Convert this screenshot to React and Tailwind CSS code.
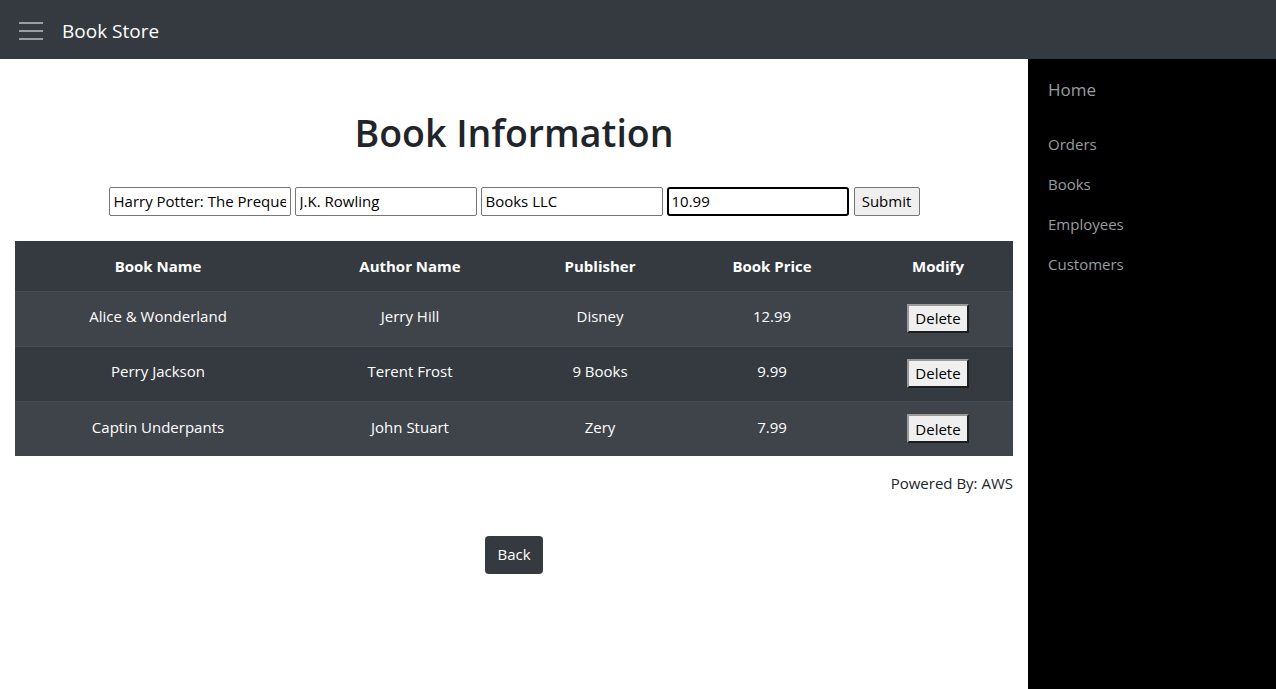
import React from "react";

const rows = [
  ["Alice & Wonderland", "Jerry Hill", "Disney", "12.99"],
  ["Perry Jackson", "Terent Frost", "9 Books", "9.99"],
  ["Captin Underpants", "John Stuart", "Zery", "7.99"],
];

export default function App() {
  const font = { fontFamily: '"Open Sans", "Noto Sans", sans-serif' };
  return (
    <div className="w-[1276px] h-[689px] flex flex-col bg-white text-[#212529]" style={font}>
      <header className="h-[59px] bg-[#343a40] flex items-center shrink-0">
        <div className="ml-[19px] mt-[3px] w-[24px] flex flex-col gap-[6px]">
          <span className="block h-[2px] bg-[#9a9da0]" />
          <span className="block h-[2px] bg-[#9a9da0]" />
          <span className="block h-[2px] bg-[#9a9da0]" />
        </div>
        <span className="ml-[19px] mt-[3px] text-[19px] text-white">Book Store</span>
      </header>
      <div className="flex flex-1">
        <main className="w-[1028px] flex flex-col items-center px-[15px]">
          <h1 className="mt-[50px] text-[37.5px] font-semibold leading-[48px] text-[#212529]">
            Book Information
          </h1>
          <div className="mt-[29px] flex items-center gap-[4px] h-[30px]">
            <input defaultValue="Harry Potter: The Prequel" className="w-[182px] h-[29px] border border-[#767676] rounded-[2px] px-[4px] text-[15px] text-black outline-none" />
            <input defaultValue="J.K. Rowling" className="w-[182px] h-[29px] border border-[#767676] rounded-[2px] px-[4px] text-[15px] text-black outline-none" />
            <input defaultValue="Books LLC" className="w-[182px] h-[29px] border border-[#767676] rounded-[2px] px-[4px] text-[15px] text-black outline-none" />
            <input defaultValue="10.99" className="w-[182px] h-[29px] border-2 border-black rounded-[3px] px-[3px] text-[15px] text-black outline-none" />
            <button className="ml-[1px] h-[29px] w-[66px] bg-[#efefef] border border-[#767676] rounded-[2px] text-[15px] text-black">Submit</button>
          </div>
          <table className="mt-[25px] w-[998px] text-white text-[15px] border-collapse">
            <thead>
              <tr className="h-[50px] bg-[#343a40]">
                <th className="w-[286px] font-bold">Book Name</th>
                <th className="w-[218px] font-bold">Author Name</th>
                <th className="w-[162px] font-bold">Publisher</th>
                <th className="w-[182px] font-bold">Book Price</th>
                <th className="font-bold">Modify</th>
              </tr>
            </thead>
            <tbody>
              {rows.map((r, i) => (
                <tr key={i} className={`h-[55px] border-t border-[#454d55] ${i % 2 === 0 ? "bg-[#3f444b]" : "bg-[#343a40]"}`}>
                  <td className="text-center align-middle pb-[4px]">{r[0]}</td>
                  <td className="text-center align-middle pb-[4px]">{r[1]}</td>
                  <td className="text-center align-middle pb-[4px]">{r[2]}</td>
                  <td className="text-center align-middle pb-[4px]">{r[3]}</td>
                  <td className="text-center align-middle pb-[4px]">
                    <button className="mt-[4px] w-[62px] h-[29px] bg-[#efefef] text-black border-2 border-t-[#9a9a9a] border-l-[#9a9a9a] border-b-[#1e1e1e] border-r-[#1e1e1e] text-[15px]">
                      Delete
                    </button>
                  </td>
                </tr>
              ))}
            </tbody>
          </table>
          <div className="w-[998px] text-right text-[15px] mt-[16px]">Powered By: AWS</div>
          <button className="mt-[41px] w-[58px] h-[38px] bg-[#343a40] text-white rounded-[4px] text-[15px]">Back</button>
        </main>
        <aside className="flex-1 bg-black pl-[20px]">
          <div className="mt-[19px] text-[17px] text-[#9a9da0] leading-[24px]">Home</div>
          <nav className="mt-[32px] flex flex-col gap-[19px] text-[15px] text-[#9a9da0]">
            <span className="leading-[21px]">Orders</span>
            <span className="leading-[21px]">Books</span>
            <span className="leading-[21px]">Employees</span>
            <span className="leading-[21px]">Customers</span>
          </nav>
        </aside>
      </div>
    </div>
  );
}
